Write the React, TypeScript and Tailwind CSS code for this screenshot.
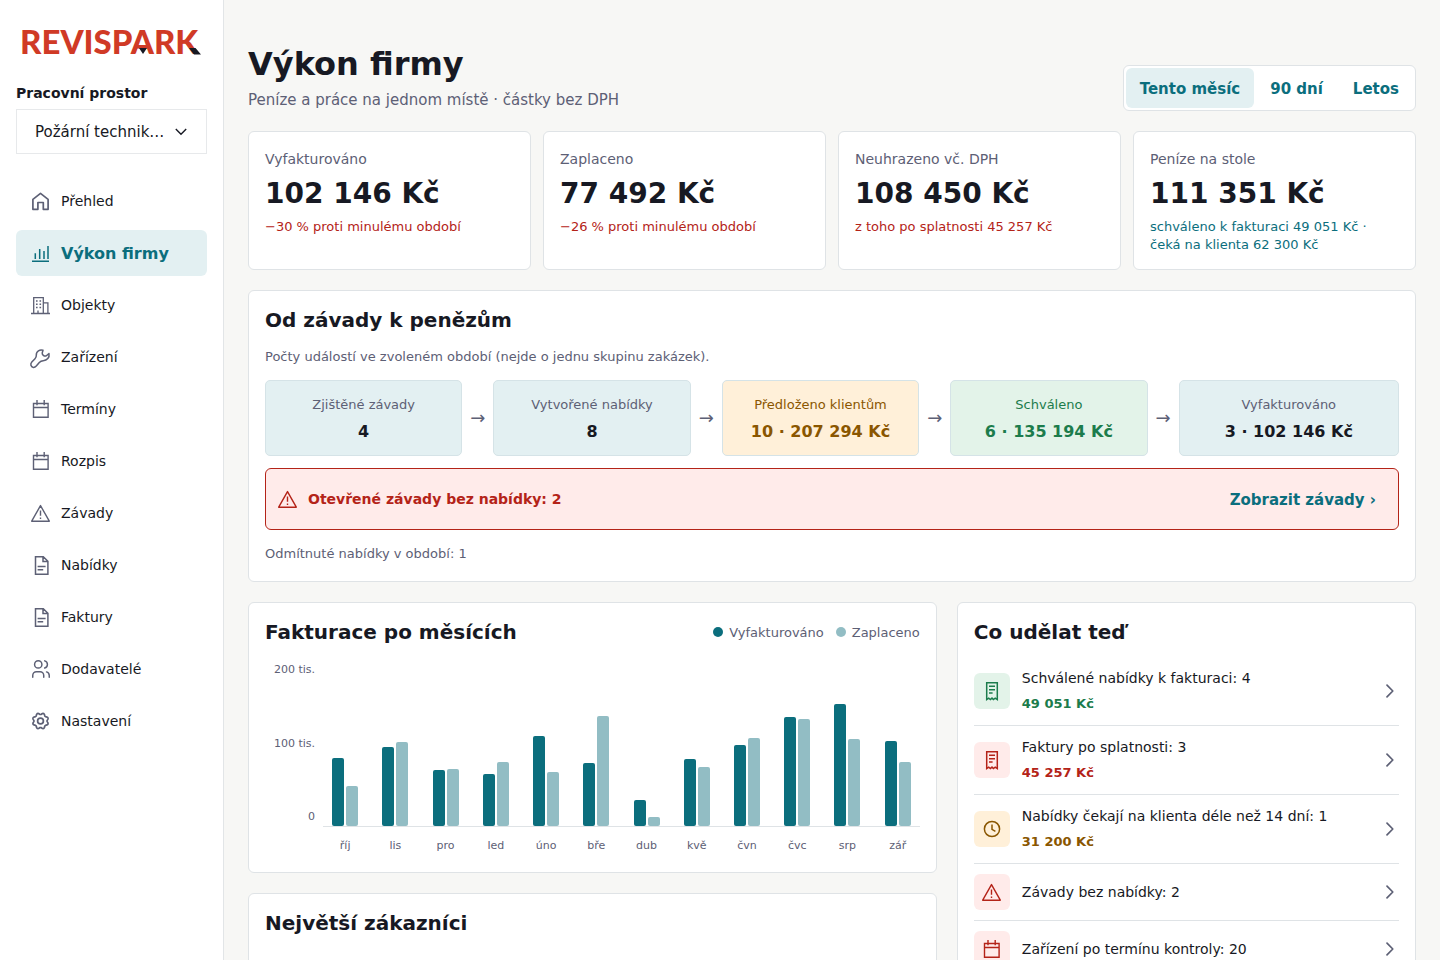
import type { ReactNode } from "react";
import { TbUsers } from "react-icons/tb";

type Tone = "green" | "red" | "amber";

function Svg({ children, width = 1.4 }: { children: ReactNode; width?: number }) {
  return (
    <svg
      viewBox="0 0 20 20"
      className="size-5 shrink-0 overflow-visible"
      fill="none"
      stroke="currentColor"
      strokeWidth={width}
      aria-hidden="true"
    >
      {children}
    </svg>
  );
}

const HomeIcon = () => (
  <Svg width={1.7}>
    <path strokeLinejoin="round" d="M1.9 8.3 9.5 2.4l7.6 5.9v10h-4.8v-6.8H6.9v6.8h-5z" />
  </Svg>
);

const BarsIcon = () => (
  <Svg width={1.5}>
    <path d="M1 18.2h17M4.3 10.3v5.6M8.7 6v9.9M13 8v7.9M17 3v12.9" />
  </Svg>
);

const BuildingIcon = () => (
  <Svg width={1.3}>
    <path d="M0 18.5h19M2.7 18.5V2.7h9.6v15.8M12.3 7.8h4.6v10.7M7 18.5v-3" />
    <path
      strokeWidth={1.5}
      d="M5 6h1.6M8.5 6h1.6M5 9.3h1.6M8.5 9.3h1.6M5 12.6h1.6M8.5 12.6h1.6"
    />
  </Svg>
);

const WrenchIcon = () => (
  <Svg width={1.5}>
    <path
      strokeLinejoin="round"
      d="M12 3.300C9 2.200 5 4 5.300 8.300C5.400 10 5 10.800 4 11.700L.8 15C-1 17 -.2 20 2.300 20.400C3.800 20.500 4.600 19.800 5.500 18.800L8.300 15.500C9.300 14.400 10.500 13.800 12.200 13.700C16 13.600 18.800 10.500 18 6.600L15 9C13 9.300 11 7.800 11.200 6Z"
    />
  </Svg>
);

const CalendarIcon = () => (
  <Svg width={1.4}>
    <path d="M2.5 4.5h14.600v13.800H2.500zM2.500 8.500h14.600M6 1v5.200M13.200 1v5.200" />
  </Svg>
);

const WarningIcon = () => (
  <Svg width={1.4}>
    <path strokeLinejoin="round" d="M9.5 2.6 18.3 18.2H.7z" />
    <path d="M9.5 7.6v5.2M9.5 14.4V16" />
  </Svg>
);

const DocumentIcon = () => (
  <Svg width={1.5}>
    <path d="M4.5 1.7h7.8l4.6 4.6v12.9H4.5zM12 1.7v4.9h4.9M6.6 11.4h8M6.6 14.8h5.6" />
  </Svg>
);

const ReceiptIcon = () => (
  <Svg width={1.5}>
    <path d="M4.7 1.7h10.6v16.8l-2.1-1.4-1.8 1.4L10 17.1l-1.6 1.4-1.7-1.4-2 1.4zM7 5.3h6M7 8.7h6M7 12h3.6" />
  </Svg>
);

const ClockIcon = () => (
  <Svg width={1.5}>
    <circle cx="10" cy="10" r="7.6" />
    <path d="M10 5.4v5l3.4 2" />
  </Svg>
);

const ChevronRight = () => (
  <Svg width={1.7}>
    <path strokeLinecap="round" strokeLinejoin="round" d="m8 4.200 5.800 5.800L8 15.800" />
  </Svg>
);

const UsersIcon = () => <TbUsers className="-mx-px size-[22px] shrink-0" strokeWidth={1.6} aria-hidden="true" />;

/* Eight rounded teeth, with a gap between two of them at the top. */
const gearOutline = Array.from({ length: 96 }, (_, i) => {
  const angle = (i / 96) * 2 * Math.PI;
  const radius = 7.3 - 0.8 * Math.cos(8 * angle);
  return `${(9.5 + radius * Math.cos(angle)).toFixed(2)},${(10 + radius * Math.sin(angle)).toFixed(2)}`;
}).join(" ");

const GearIcon = () => (
  <Svg width={1.7}>
    <polygon strokeLinejoin="round" points={gearOutline} />
    <circle cx="9.5" cy="10" r="2.900" />
  </Svg>
);

const navItems = [
  { label: "Přehled", Icon: HomeIcon },
  { label: "Výkon firmy", Icon: BarsIcon, active: true },
  { label: "Objekty", Icon: BuildingIcon },
  { label: "Zařízení", Icon: WrenchIcon },
  { label: "Termíny", Icon: CalendarIcon },
  { label: "Rozpis", Icon: CalendarIcon },
  { label: "Závady", Icon: WarningIcon },
  { label: "Nabídky", Icon: DocumentIcon },
  { label: "Faktury", Icon: DocumentIcon },
  { label: "Dodavatelé", Icon: UsersIcon },
  { label: "Nastavení", Icon: GearIcon },
];

function Logo() {
  return (
    <a
      href="#"
      aria-label="REVISPARK"
      className="relative flex h-[50px] items-center pl-1 font-['Lato',sans-serif] text-[33px] leading-[50px] font-black text-[#d03a26]"
    >
      REVISPARK
      <svg viewBox="0 0 191 50" className="absolute inset-0 h-[50px] w-[191px]" aria-hidden="true">
        <path fill="#171923" d="M123 32h8l-4 6zM173 32h6.500l5.500 6.500h-7z" />
      </svg>
    </a>
  );
}

function Sidebar() {
  return (
    <aside className="w-56 shrink-0 border-r border-[#e2e5e7] bg-white px-4 pt-4">
      <Logo />
      <label htmlFor="workspace" className="mt-4 block text-sm leading-[22px] font-bold">
        Pracovní prostor
      </label>
      <div className="relative mt-[5px]">
        <select
          id="workspace"
          className="block h-[45px] w-full appearance-none border border-[#e7e9eb] bg-white pt-0.5 pr-8 pl-[18px] text-[15px]"
        >
          <option>Požární technik…</option>
        </select>
        <svg
          viewBox="0 0 12 12"
          className="pointer-events-none absolute top-4 right-5 size-3"
          fill="none"
          stroke="currentColor"
          strokeWidth="1.4"
          aria-hidden="true"
        >
          <path d="M.8 4 6 9.200 11.200 4" />
        </svg>
      </div>
      <nav className="mt-6 flex flex-col gap-1.5">
        {navItems.map(({ label, Icon, active }) => (
          <a
            key={label}
            href="#"
            aria-current={active ? "page" : undefined}
            className={
              active
                ? "flex h-[46px] items-center gap-2.5 rounded-md bg-[#e3f0f2] px-[15px] text-base leading-[23px] font-bold text-[#0b6e7d]"
                : "flex h-[46px] items-center gap-2.5 rounded-md px-[15px] text-[#5d6075]"
            }
          >
            <Icon />
            <span className={active ? "" : "text-sm text-[#171923]"}>{label}</span>
          </a>
        ))}
      </nav>
    </aside>
  );
}

const stats = [
  { label: "Vyfakturováno", value: "102 146 Kč", note: "−30 % proti minulému období", tone: "text-[#b42318]" },
  { label: "Zaplaceno", value: "77 492 Kč", note: "−26 % proti minulému období", tone: "text-[#b42318]" },
  { label: "Neuhrazeno vč. DPH", value: "108 450 Kč", note: "z toho po splatnosti 45 257 Kč", tone: "text-[#b42318]" },
  {
    label: "Peníze na stole",
    value: "111 351 Kč",
    note: "schváleno k fakturaci 49 051 Kč · čeká na klienta 62 300 Kč",
    tone: "text-[#0b6e7d]",
  },
];

const steps = [
  { label: "Zjištěné závady", value: "4", box: "bg-[#e3f0f2]", labelTone: "text-[#5d6075]", valueTone: "" },
  { label: "Vytvořené nabídky", value: "8", box: "bg-[#e3f0f2]", labelTone: "text-[#5d6075]", valueTone: "" },
  {
    label: "Předloženo klientům",
    value: "10 · 207 294 Kč",
    box: "bg-[#fff0d9]",
    labelTone: "text-[#8a5600]",
    valueTone: "text-[#8a5600]",
  },
  {
    label: "Schváleno",
    value: "6 · 135 194 Kč",
    box: "bg-[#e3f3e9]",
    labelTone: "text-[#1c7c4c]",
    valueTone: "text-[#1c7c4c]",
  },
  { label: "Vyfakturováno", value: "3 · 102 146 Kč", box: "bg-[#e3f0f2]", labelTone: "text-[#5d6075]", valueTone: "" },
];

/* Bar heights in pixels: invoiced, paid. */
const months = [
  { name: "říj", invoiced: 68, paid: 40 },
  { name: "lis", invoiced: 79, paid: 84 },
  { name: "pro", invoiced: 56, paid: 57 },
  { name: "led", invoiced: 52, paid: 64 },
  { name: "úno", invoiced: 90, paid: 54 },
  { name: "bře", invoiced: 63, paid: 110 },
  { name: "dub", invoiced: 26, paid: 9 },
  { name: "kvě", invoiced: 67, paid: 59 },
  { name: "čvn", invoiced: 81, paid: 88 },
  { name: "čvc", invoiced: 109, paid: 107 },
  { name: "srp", invoiced: 122, paid: 87 },
  { name: "zář", invoiced: 85, paid: 64 },
];

const tasks: { label: string; amount?: string; tone: Tone; Icon: () => ReactNode }[] = [
  { label: "Schválené nabídky k fakturaci: 4", amount: "49 051 Kč", tone: "green", Icon: ReceiptIcon },
  { label: "Faktury po splatnosti: 3", amount: "45 257 Kč", tone: "red", Icon: ReceiptIcon },
  { label: "Nabídky čekají na klienta déle než 14 dní: 1", amount: "31 200 Kč", tone: "amber", Icon: ClockIcon },
  { label: "Závady bez nabídky: 2", tone: "red", Icon: WarningIcon },
  { label: "Zařízení po termínu kontroly: 20", tone: "red", Icon: CalendarIcon },
];

const tileTones: Record<Tone, string> = {
  green: "bg-[#e3f3e9] text-[#1c7c4c]",
  red: "bg-[#ffebea] text-[#b42318]",
  amber: "bg-[#fff0d9] text-[#8a5600]",
};

const amountTones: Record<Tone, string> = {
  green: "text-[#1c7c4c]",
  red: "text-[#b42318]",
  amber: "text-[#8a5600]",
};

function Panel({ children }: { children: ReactNode }) {
  return (
    <section className="flex flex-col gap-3 rounded-md border border-[#dfe3e6] bg-white p-4">{children}</section>
  );
}

const Heading = ({ children }: { children: ReactNode }) => (
  <h2 className="text-xl leading-[26px] font-bold">{children}</h2>
);

function PageHeader() {
  const periods = ["Tento měsíc", "90 dní", "Letos"];
  return (
    <header className="flex items-end justify-between">
      <div className="flex flex-col gap-[5px]">
        <h1 className="text-[32px] leading-10 font-bold">Výkon firmy</h1>
        <p className="text-[15px] leading-[22px] text-[#5d6075]">Peníze a práce na jednom místě · částky bez DPH</p>
      </div>
      <div className="flex gap-0.5 rounded-md border border-[#dfe3e6] bg-white p-0.5">
        {periods.map((period, i) => (
          <button
            key={period}
            type="button"
            aria-pressed={i === 0}
            className={
              i === 0
                ? "h-10 rounded-md bg-[#e3f0f2] px-3.5 pt-0.5 text-[15px] font-bold text-[#0b6e7d]"
                : "h-10 rounded-md px-3.5 pt-0.5 text-[15px] font-bold text-[#0b6e7d]"
            }
          >
            {period}
          </button>
        ))}
      </div>
    </header>
  );
}

function Stats() {
  return (
    <div className="grid grid-cols-4 gap-3">
      {stats.map((s) => (
        <section
          key={s.label}
          className="flex flex-col gap-[3px] rounded-md border border-[#dfe3e6] bg-white px-4 pt-4 pb-[15px]"
        >
          <h2 className="text-sm leading-[22px] text-[#5d6075]">{s.label}</h2>
          <p className="text-[28px] leading-[42px] font-bold">{s.value}</p>
          <p className={`text-[13px] leading-[18px] ${s.tone}`}>{s.note}</p>
        </section>
      ))}
    </div>
  );
}

function Funnel() {
  return (
    <Panel>
      <Heading>Od závady k penězům</Heading>
      <p className="text-[13px] leading-[23px] text-[#5d6075]">
        Počty událostí ve zvoleném období (nejde o jednu skupinu zakázek).
      </p>
      <ol className="flex gap-2">
        {steps.map((s, i) => (
          <li key={s.label} className="flex min-w-0 flex-1 items-center gap-2">
            <div
              className={`flex min-w-0 flex-1 flex-col gap-1 rounded-[5px] border border-[#d5e3e7] py-3 text-center ${s.box}`}
            >
              <span className={`text-[13px] leading-[23px] ${s.labelTone}`}>{s.label}</span>
              <strong className={`text-base leading-[23px] ${s.valueTone}`}>{s.value}</strong>
            </div>
            {i < steps.length - 1 && (
              <span aria-hidden="true" className="text-lg text-[#5d6075]">
                →
              </span>
            )}
          </li>
        ))}
      </ol>
      <div className="flex h-[62px] items-center gap-2.5 rounded-md border border-[#b42318] bg-[#ffebea] px-3 text-[#b42318]">
        <WarningIcon />
        <strong className="flex-1 text-sm">Otevřené závady bez nabídky: 2</strong>
        <a href="#" className="px-2.5 pt-2.5 pb-2 text-[15px] font-bold text-[#0b6e7d]">
          Zobrazit závady ›
        </a>
      </div>
      <p className="text-[13px] leading-[23px] text-[#5d6075]">Odmítnuté nabídky v období: 1</p>
    </Panel>
  );
}

function Chart() {
  return (
    <Panel>
      <div className="flex items-center justify-between">
        <Heading>Fakturace po měsících</Heading>
        <ul className="flex gap-3 text-[13px] leading-[23px] text-[#5d6075]">
          <li className="flex items-center gap-1.5">
            <span className="size-2.5 rounded-full bg-[#0b6e7d]" />
            Vyfakturováno
          </li>
          <li className="flex items-center gap-1.5">
            <span className="size-2.5 rounded-full bg-[#92bdc4]" />
            Zaplaceno
          </li>
        </ul>
      </div>
      <div className="flex gap-2 text-[11px] text-[#5d6075]">
        <div className="flex h-[172px] w-[50px] flex-col justify-between text-right leading-[25px]">
          <span>200 tis.</span>
          <span>100 tis.</span>
          <span>0</span>
        </div>
        <div className="flex flex-1 flex-col gap-2">
          <div className="flex h-[170px] gap-1.5 border-b border-[#dfe3e6]">
            {months.map((m) => (
              <div key={m.name} className="flex flex-1 items-end justify-center gap-0.5">
                <div className="w-3 rounded-[2px] bg-[#0b6e7d]" style={{ height: m.invoiced }} />
                <div className="w-3 rounded-[2px] bg-[#92bdc4]" style={{ height: m.paid }} />
              </div>
            ))}
          </div>
          <div className="flex gap-1.5 leading-[21px]">
            {months.map((m) => (
              <span key={m.name} className="flex-1 text-center">
                {m.name}
              </span>
            ))}
          </div>
        </div>
      </div>
    </Panel>
  );
}

function Tasks() {
  return (
    <Panel>
      <Heading>Co udělat teď</Heading>
      <ul className="divide-y divide-[#dfe3e6]">
        {tasks.map(({ label, amount, tone, Icon }) => (
          <li key={label}>
            <a href="#" className="flex items-center gap-3 py-2.5">
              <span className={`flex size-9 shrink-0 items-center justify-center rounded-md ${tileTones[tone]}`}>
                <Icon />
              </span>
              <span className="flex flex-1 flex-col gap-0.5">
                <span className="text-sm leading-[23px]">{label}</span>
                {amount && (
                  <strong className={`text-[13px] leading-[23px] ${amountTones[tone]}`}>{amount}</strong>
                )}
              </span>
              <span className="text-[#5d6075]">
                <ChevronRight />
              </span>
            </a>
          </li>
        ))}
      </ul>
    </Panel>
  );
}

export default function App() {
  return (
    <div className="flex h-screen bg-[#f7f7f5] font-['DejaVu_Sans',sans-serif] text-[#171923]">
      <Sidebar />
      <main className="min-w-0 flex-1 overflow-y-auto px-6 pt-11 pb-6 [scrollbar-width:none]">
        <div className="flex flex-col gap-5">
          <PageHeader />
          <Stats />
          <Funnel />
          <div className="grid grid-cols-[3fr_2fr] items-start gap-5">
            <div className="flex flex-col gap-5">
              <Chart />
              <Panel>
                <Heading>Největší zákazníci</Heading>
                <div className="h-40" />
              </Panel>
            </div>
            <Tasks />
          </div>
        </div>
      </main>
    </div>
  );
}
